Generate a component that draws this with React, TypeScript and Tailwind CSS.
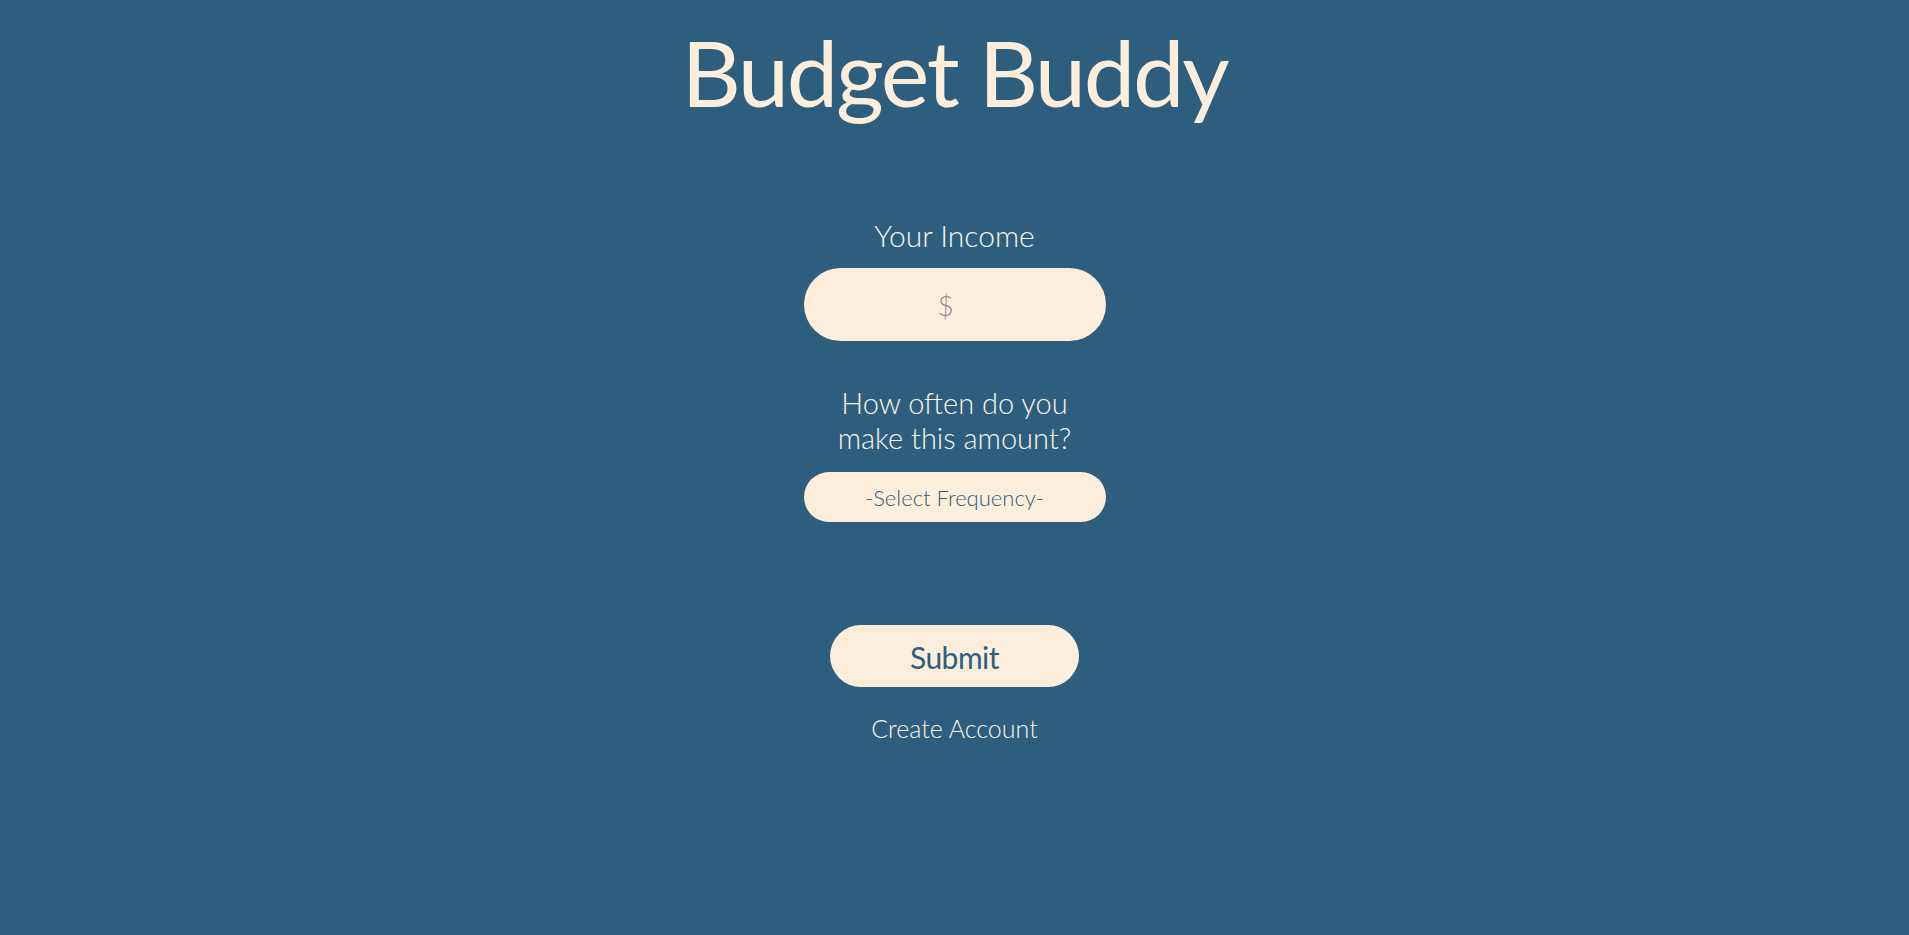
import React from "react";

export default function App() {
  return (
    <div
      className="min-h-[935px] w-full bg-[#2d5e7e] flex flex-col items-center"
      style={{ fontFamily: "Lato, 'Open Sans', sans-serif" }}
    >
      <h1 className="mt-[17px] text-[92px] leading-[110px] tracking-[-2.3px] font-normal text-[#fdeedb]">
        Budget Buddy
      </h1>
      <label className="mt-[90px] text-[30px] leading-[36px] font-light text-[#fdf3e6]">
        Your Income
      </label>
      <input
        type="text"
        placeholder="$"
        className="mt-[15px] w-[302px] h-[73px] rounded-full bg-[#fdeedb] text-center text-[28px] font-light text-[#2d5e7e] placeholder:text-[#8c8c8c] outline-none pr-[18px]"
      />
      <div className="mt-[44px] text-[29px] leading-[35px] font-light text-[#fdf3e6] text-center w-[250px]">
        How often do you make this amount?
      </div>
      <div className="mt-[17px] w-[302px] h-[50px] rounded-full bg-[#fdeedb] flex items-center justify-center text-[22px] font-light text-[#2d5e7e]">
        -Select Frequency-
      </div>
      <button className="mt-[103px] w-[249px] h-[62px] rounded-full bg-[#fdeedb] text-[30px] tracking-[-0.5px] font-normal text-[#2d5e7e] pt-[2px]">
        Submit
      </button>
      <a className="mt-[26px] text-[25px] leading-[30px] font-light text-[#fdf3e6]">
        Create Account
      </a>
    </div>
  );
}
